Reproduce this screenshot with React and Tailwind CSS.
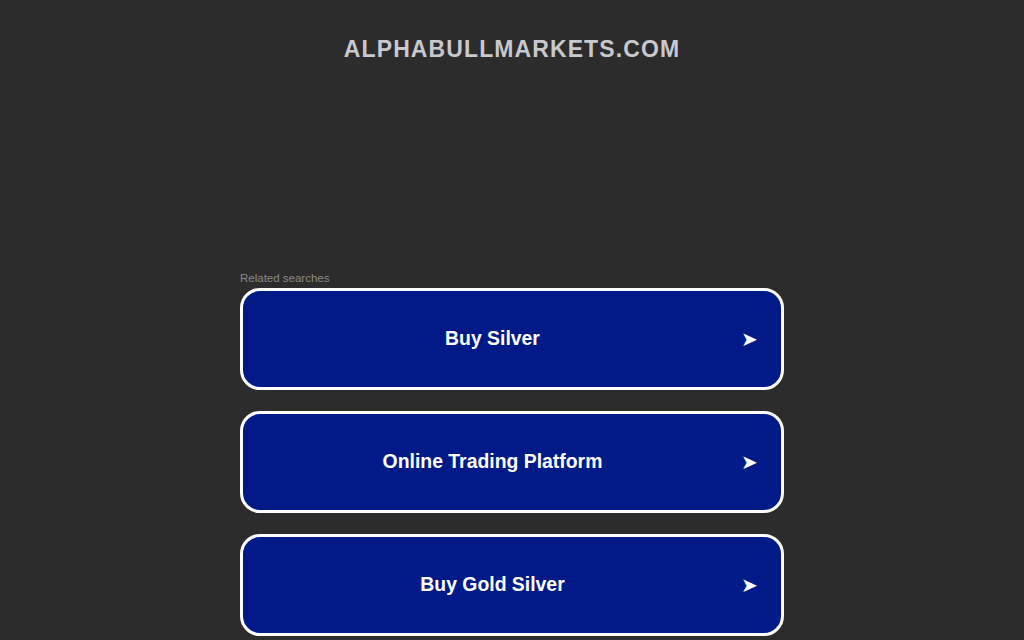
import React from "react";

const searches = ["Buy Silver", "Online Trading Platform", "Buy Gold Silver"];

const App = () => (
  <div className="min-h-screen bg-[#2c2c2c] font-['Liberation_Sans',Arial,sans-serif]">
    <div className="pt-[35px] text-center">
      <h1 className="text-[23px] leading-[29px] font-bold tracking-[1.1px] text-[#c8c8cf]">
        ALPHABULLMARKETS.COM
      </h1>
    </div>

    <div className="w-[544px] mx-auto mt-[207px]">
      <p className="text-[11.5px] leading-[14px] text-[#8a8a8a] mb-[3px]">Related searches</p>
      <div className="flex flex-col gap-[21px]">
        {searches.map((s) => (
          <a
            key={s}
            href="#"
            className="flex items-center h-[102px] rounded-[20px] border-[3px] border-white bg-[#011a88] pl-[22px] pr-[23px]"
          >
            <span className="flex-1 text-center text-[19.4px] font-bold text-white">{s}</span>
            <span className="w-[38px] text-right text-[20px] text-white leading-none">➤</span>
          </a>
        ))}
      </div>
    </div>
  </div>
);

export default App;
